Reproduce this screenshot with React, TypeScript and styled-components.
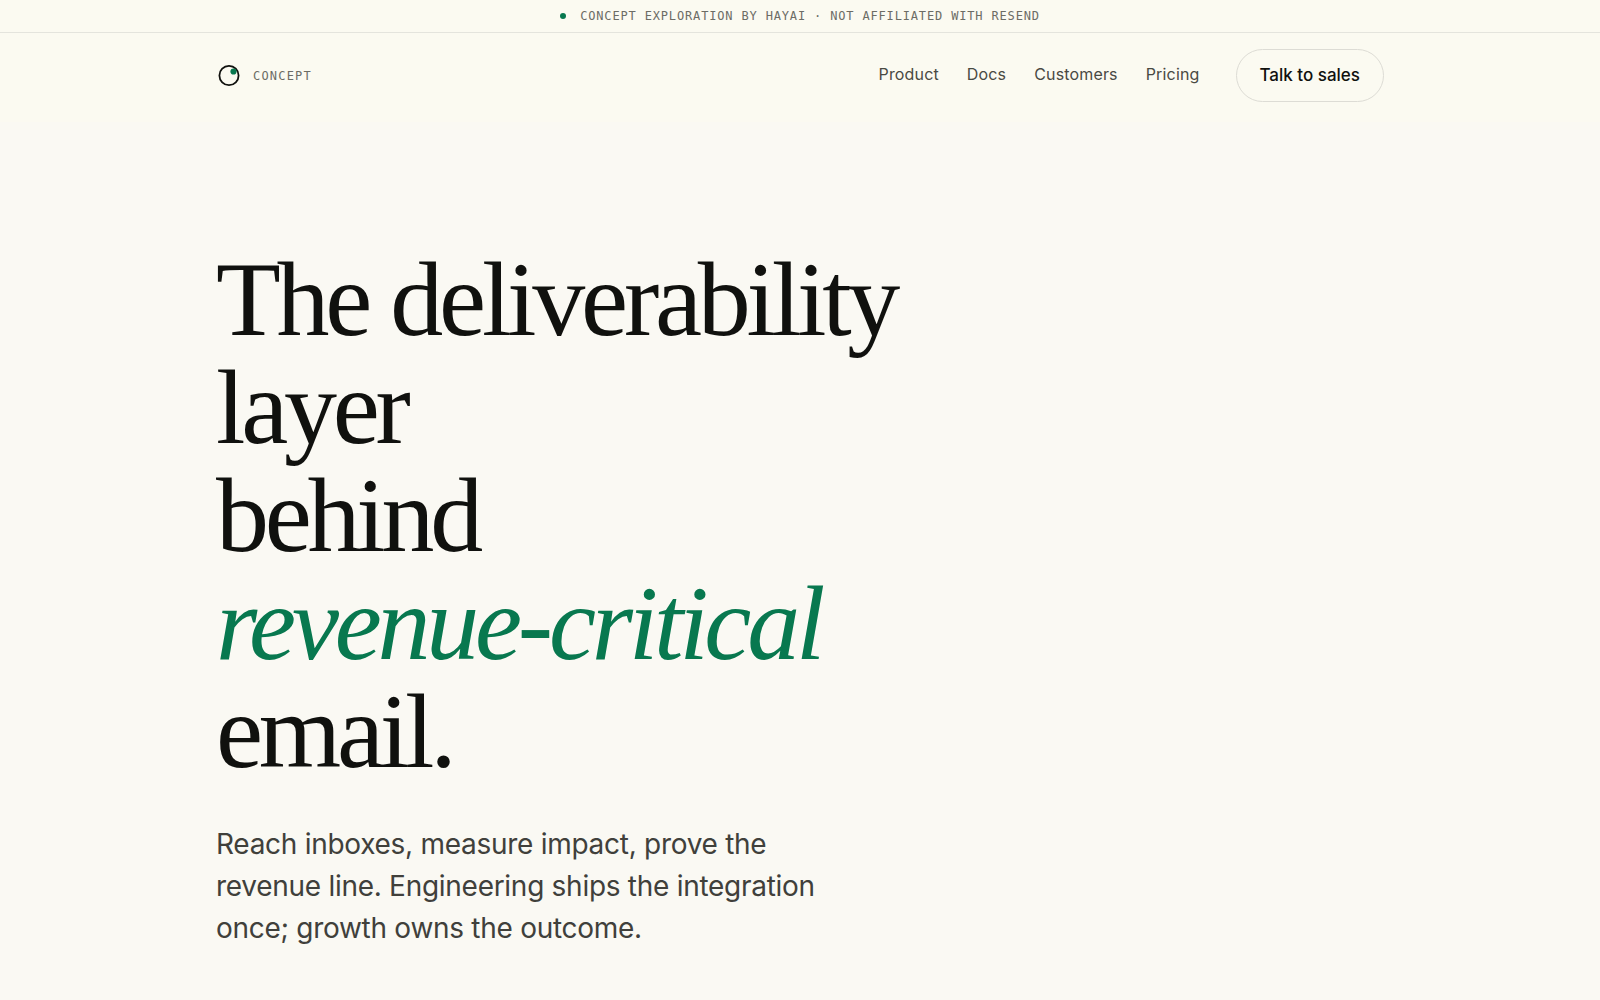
import React from "react";
import styled, { createGlobalStyle } from "styled-components";

const GlobalStyle = createGlobalStyle`
  *, *::before, *::after { box-sizing: border-box; }
  body {
    margin: 0;
    background: #faf9f3;
    color: #10110e;
    font-family: Inter, "Liberation Sans", sans-serif;
    overflow-x: hidden;
  }
`;

const mono = `"DejaVu Sans Mono", "Liberation Mono", monospace`;

const Banner = styled.div`
  display: flex;
  align-items: center;
  justify-content: center;
  gap: 14px;
  height: 33px;
  background: #fbfaf1;
  border-bottom: 1px solid #e4e4dd;
  color: #6c6c65;
  font-family: ${mono};
  font-size: 12px;
  letter-spacing: 0.07em;
  line-height: 16px;
  text-transform: uppercase;
`;

const Dot = styled.span`
  width: 6px;
  height: 6px;
  border-radius: 50%;
  background: #08784f;
`;

const Header = styled.header`
  background: #fbfaf1;
  padding: 16px 32px 20px;
`;

const Container = styled.div`
  max-width: 1168px;
  margin: 0 auto;
`;

const Bar = styled(Container)`
  display: flex;
  align-items: center;
  justify-content: space-between;
`;

const Brand = styled.a`
  display: flex;
  align-items: center;
  gap: 11px;
  color: #6c6c65;
  font-family: ${mono};
  font-size: 12px;
  letter-spacing: 0.1em;
  line-height: 16px;
  text-decoration: none;
  text-transform: uppercase;
`;

const Nav = styled.nav`
  display: flex;
  align-items: center;
  gap: 28px;
`;

const NavLink = styled.a`
  color: #494943;
  font-size: 16px;
  letter-spacing: 0.01em;
  line-height: 24px;
  padding-bottom: 4px;
  text-decoration: none;
`;

const SalesButton = styled.button`
  height: 53px;
  margin-left: 8px;
  padding: 0 23px 2px;
  border: 1px solid #dddcd5;
  border-radius: 27px;
  background: transparent;
  color: #10110e;
  font: 500 17px/24px Inter, "Liberation Sans", sans-serif;
  cursor: pointer;
`;

const Hero = styled.main`
  padding: 124px 32px 48px;
`;

const Title = styled.h1`
  margin: 0;
  font-family: "Liberation Serif", serif;
  font-size: 106px;
  font-weight: 400;
  line-height: 108px;
  letter-spacing: -0.04em;
`;

const Accent = styled.em`
  color: #08784f;
  font-style: italic;
`;

const Lead = styled.p`
  max-width: 640px;
  margin: 37px 0 0;
  color: #40403b;
  font-size: 28px;
  letter-spacing: -0.01em;
  line-height: 42px;
`;

const links = ["Product", "Docs", "Customers", "Pricing"];

function Mark() {
  return (
    <svg width="26" height="26" viewBox="0 0 26 26" aria-hidden="true">
      <circle cx="13" cy="12.5" r="9.6" fill="none" stroke="#10110e" strokeWidth="1.8" />
      <circle cx="17.5" cy="8.5" r="3.1" fill="#08784f" />
    </svg>
  );
}

export default function App() {
  return (
    <>
      <GlobalStyle />
      <Banner>
        <Dot />
        <span>Concept exploration by Hayai · Not affiliated with Resend</span>
      </Banner>
      <Header>
        <Bar>
          <Brand href="#">
            <Mark />
            <span>Concept</span>
          </Brand>
          <Nav>
            {links.map((label) => (
              <NavLink key={label} href={`#${label.toLowerCase()}`}>
                {label}
              </NavLink>
            ))}
            <SalesButton type="button">Talk to sales</SalesButton>
          </Nav>
        </Bar>
      </Header>
      <Hero>
        <Container>
          <Title>
            The deliverability
            <br />
            layer
            <br />
            behind
            <br />
            <Accent>revenue-critical</Accent>
            <br />
            email.
          </Title>
          <Lead>
            Reach inboxes, measure impact, prove the revenue line. Engineering ships the
            integration once; growth owns the outcome.
          </Lead>
        </Container>
      </Hero>
    </>
  );
}
